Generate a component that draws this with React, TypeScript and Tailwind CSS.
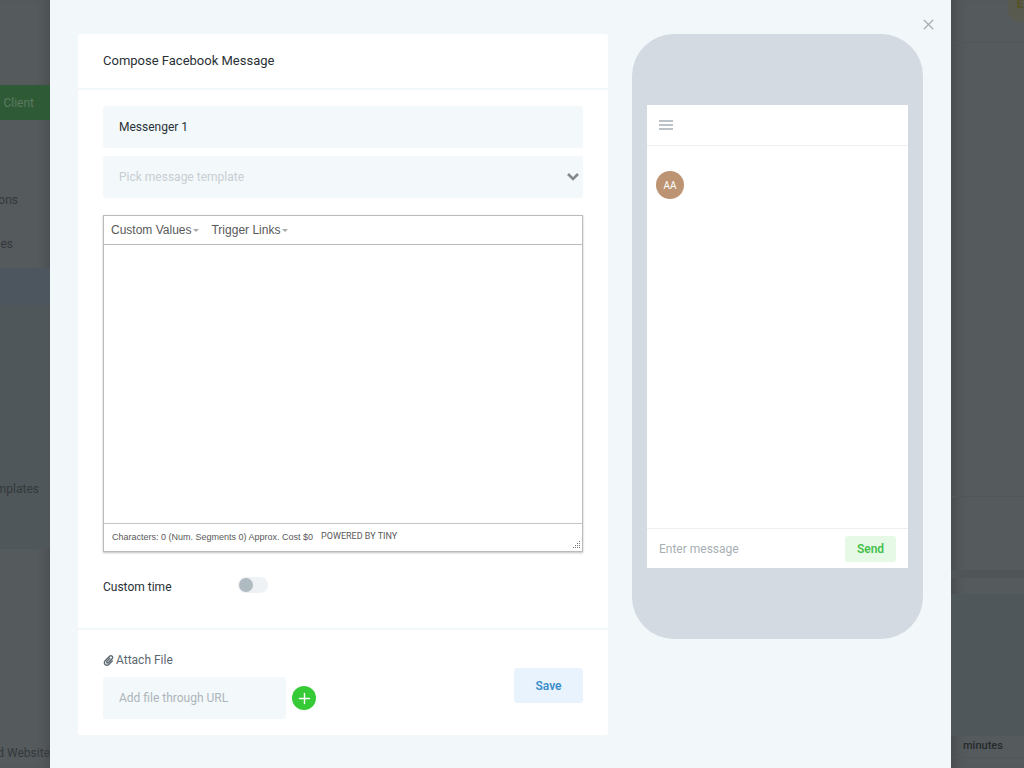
import { Menu, Plus, X } from "lucide-react";
import { FaPaperclip } from "react-icons/fa";

function Sidebar() {
  return (
    <aside className="flex w-[50px] shrink-0 flex-col overflow-hidden bg-[#555a5d] text-xs whitespace-nowrap text-[#34393c] shadow-[inset_-10px_0_12px_-8px_rgba(0,0,0,0.18)]">
      <div className="mt-[85px] flex h-[35px] items-center justify-end bg-[#2f5a36] pr-4 text-[#5b7a60]">n Client</div>
      <div className="mt-[70px] flex h-5 items-center justify-end pr-8">ons</div>
      <div className="mt-6 flex h-5 items-center justify-end pr-[37px]">es</div>
      <div className="mt-[14px] h-[37px] bg-[#4d555e]" />
      <div className="flex h-[244px] flex-col justify-end bg-[#4f575a] pb-[50px]">
        <div className="flex h-5 items-center justify-end pr-[11px]">mplates</div>
      </div>
      <div className="mt-[194px] flex h-5 items-center justify-end">d Website</div>
    </aside>
  );
}

function Backdrop() {
  return (
    <aside className="flex w-[73px] shrink-0 flex-col overflow-hidden bg-[#555a5d] shadow-[inset_12px_0_12px_-8px_rgba(0,0,0,0.18)]">
      <div className="-mr-2 flex h-[22px] w-6 items-start justify-center self-end rounded-bl-xl bg-[#58594f] text-xs font-bold text-[#555325]">
        <span className="-mt-1">E</span>
      </div>
      <div className="mt-5 h-px bg-[#515659]" />
      <div className="mt-[453px] h-px bg-[#505558]" />
      <div className="mt-[73px] h-2 bg-[#505558]" />
      <div className="mt-4 h-[142px] bg-[#4f575a]" />
      <div className="flex h-[22px] items-center border-b border-[#505558] pl-3 text-[11px] font-medium text-[#25292b]">minutes</div>
    </aside>
  );
}

function MenuButton({ label }: { label: string }) {
  return (
    <button type="button" className="flex items-center gap-0.5">
      {label}
      <svg viewBox="0 0 6 3" className="h-[3px] w-[6px] fill-[#aaaaaa]" aria-hidden="true">
        <path d="M0 0h6L3 3z" />
      </svg>
    </button>
  );
}

function Editor() {
  return (
    <div className="mt-[17px] flex flex-col border border-[#b8bcbe] bg-white font-['Liberation_Sans',sans-serif] text-[#595959] shadow-[0_1px_2px_rgba(0,0,0,0.25)]">
      <div className="flex h-[29px] items-center gap-3 border-b border-[#b8bcbe] px-[7px] text-xs">
        <MenuButton label="Custom Values" />
        <MenuButton label="Trigger Links" />
      </div>
      <textarea aria-label="Message" className="block h-[278px] w-full resize-none p-2 text-sm outline-none" />
      <div className="flex h-7 border-t border-[#c5c5c5] pl-2 text-[9px] leading-[26px]">
        <span>Characters: 0 (Num. Segments 0) Approx. Cost $0</span>
        <span className="ml-2 font-[Roboto,sans-serif] leading-6">POWERED BY TINY</span>
        <svg viewBox="0 0 8 8" className="mr-px mb-0.5 ml-auto size-2 self-end fill-[#777777]" aria-hidden="true">
          <path d="M6 0h1v1H6zM4 2h1v1H4zM6 2h1v1H6zM2 4h1v1H2zM4 4h1v1H4zM6 4h1v1H6zM0 6h1v1H0zM2 6h1v1H2zM4 6h1v1H4zM6 6h1v1H6z" />
        </svg>
      </div>
    </div>
  );
}

function Composer() {
  return (
    <form className="min-w-0 flex-1 self-start rounded-[3px] bg-white" onSubmit={(e) => e.preventDefault()}>
      <h1 className="flex h-14 items-center border-b-2 border-[#f2f7fa] px-[25px] text-[13px] text-[#2a3135]">
        Compose Facebook Message
      </h1>
      <div className="border-b-2 border-[#f2f7fa] px-[25px] pt-4 pb-[33px]">
        <input
          aria-label="Message name"
          defaultValue="Messenger 1"
          className="block h-[42px] w-full rounded-[3px] bg-[#f3f8fb] px-4 text-xs text-[#2a3135] outline-none"
        />
        <div className="relative mt-2">
          <select
            aria-label="Message template"
            className="block h-[42px] w-full appearance-none rounded-[3px] bg-[#f3f8fb] px-4 text-xs text-[#c8ced2] outline-none"
          >
            <option>Pick message template</option>
          </select>
          <svg viewBox="0 0 12 8" className="pointer-events-none absolute top-[17px] right-1 h-2 w-3" aria-hidden="true">
            <path d="M1 1l5 5 5-5" fill="none" stroke="#85898c" strokeWidth="2.6" />
          </svg>
        </div>
        <Editor />
        <label className="mt-[23px] flex items-center text-xs text-[#2a3135]">
          <span className="w-[135px] pt-1 leading-4">Custom time</span>
          <input type="checkbox" role="switch" className="peer sr-only" />
          <span className="flex h-4 w-[30px] items-center rounded-full bg-[#eff2f4] px-px peer-checked:justify-end">
            <span className="size-[14px] rounded-full bg-[#afbac1]" />
          </span>
        </label>
      </div>
      <div className="flex items-center justify-between px-[25px] pt-[22px] pb-4">
        <div>
          <label htmlFor="file-url" className="flex h-4 items-center gap-0.5 text-xs text-[#5b676f]">
            <FaPaperclip className="size-[11px]" />
            Attach File
          </label>
          <div className="mt-[9px] flex items-center gap-[6px]">
            <input
              id="file-url"
              placeholder="Add file through URL"
              className="block h-[42px] w-[183px] rounded-[3px] bg-[#f3f8fb] px-4 text-xs outline-none placeholder:text-[#adb5ba]"
            />
            <button type="button" aria-label="Add file" className="flex size-6 items-center justify-center rounded-full bg-[#37ca37] text-white">
              <Plus size={17} strokeWidth={2} />
            </button>
          </div>
        </div>
        <button type="submit" className="h-[35px] w-[69px] rounded-[3px] bg-[#e8f3fe] text-xs font-semibold text-[#3b8dc8]">
          Save
        </button>
      </div>
    </form>
  );
}

function PhonePreview() {
  return (
    <section aria-label="Preview" className="w-[291px] shrink-0 self-start rounded-[42px] bg-[#d3dae2] px-[15px] pt-[71px] pb-[71px]">
      <div className="flex flex-col bg-white">
        <header className="flex h-[41px] items-center border-b border-[#edf0f2] px-3">
          <button type="button" aria-label="Open menu" className="text-[#a5b0b6]">
            <svg viewBox="0 0 14 10" className="h-[10px] w-[14px]" aria-hidden="true">
              <path d="M0 1h14M0 5h14M0 9h14" stroke="currentColor" strokeWidth="1.4" />
            </svg>
          </button>
        </header>
        <div className="h-[382px] px-[9px] pt-[25px]">
          <div className="flex size-[28px] items-center justify-center rounded-full bg-[#bd9473] text-[10px] text-white">AA</div>
        </div>
        <div className="flex h-10 items-center border-t border-[#edf0f2] px-3">
          <input
            aria-label="Enter message"
            placeholder="Enter message"
            className="min-w-0 flex-1 text-xs outline-none placeholder:text-[#a8afb4]"
          />
          <button type="button" className="h-[26px] w-[51px] rounded-[3px] bg-[#e6f9e6] text-xs font-semibold text-[#44c04b]">
            Send
          </button>
        </div>
      </div>
    </section>
  );
}

export default function App() {
  return (
    <div className="flex min-h-screen font-[Roboto,sans-serif]">
      <Sidebar />
      <main role="dialog" aria-label="Compose Facebook Message" className="relative flex min-w-0 flex-1 gap-6 bg-[#f2f7fa] px-7 pt-[34px] pb-8">
        <Composer />
        <PhonePreview />
        <button type="button" aria-label="Close" className="absolute top-4 right-[14px] text-[#a6adb1]">
          <X size={17} strokeWidth={1.8} />
        </button>
      </main>
      <Backdrop />
    </div>
  );
}
